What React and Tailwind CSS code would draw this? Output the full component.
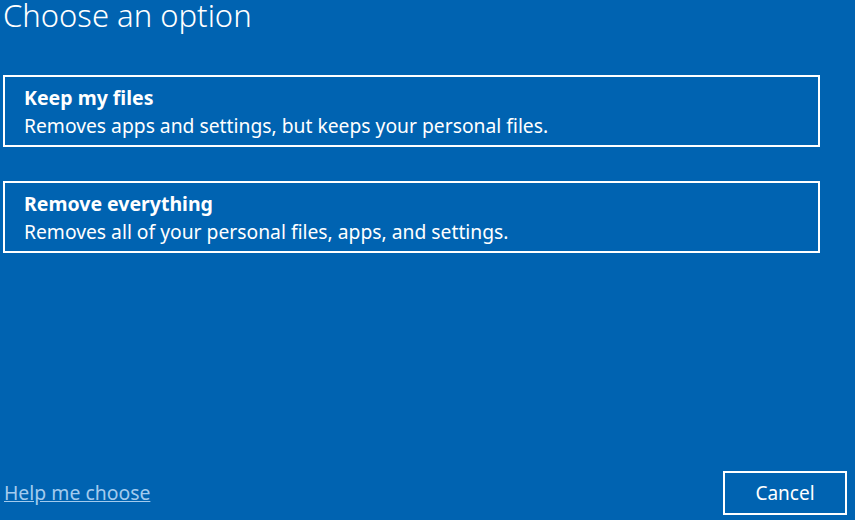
export default function App() {
  const options = [
    { title: "Keep my files", desc: "Removes apps and settings, but keeps your personal files." },
    { title: "Remove everything", desc: "Removes all of your personal files, apps, and settings." },
  ];

  return (
    <div className="w-[855px] h-[520px] bg-[#0063b1] text-white flex flex-col font-['Noto_Sans',sans-serif] overflow-hidden">
      <h1 className="pl-[3px] -mt-[3px] text-[31px] leading-[36px] font-light">Choose an option</h1>

      <div className="mt-[42px] pl-[3px] flex flex-col gap-[34px]">
        {options.map((o) => (
          <button
            key={o.title}
            className="w-[817px] h-[72px] border-2 border-white text-left pl-[19px] pt-[9px] flex flex-col"
          >
            <span className="text-[19.5px] leading-[24px] font-bold">{o.title}</span>
            <span className="text-[19.3px] leading-[24px] mt-[4px]">{o.desc}</span>
          </button>
        ))}
      </div>

      <div className="mt-auto flex items-end justify-between pl-[4px] pr-[8px] pb-[5px]">
        <a href="#" className="text-[19.4px] leading-[24px] text-[#a3cbee] underline mb-[10px]">Help me choose</a>
        <button className="w-[124px] h-[44px] border-2 border-white text-[19px]">Cancel</button>
      </div>
    </div>
  );
}
